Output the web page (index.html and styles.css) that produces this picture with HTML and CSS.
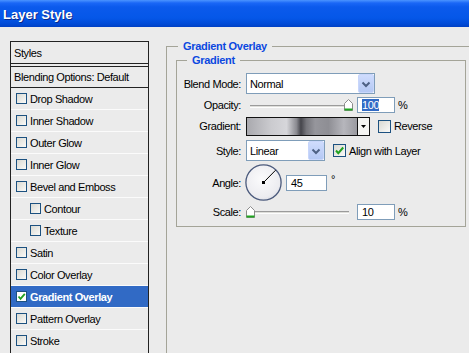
FILE: index.html
```html
<!DOCTYPE html>
<html lang="en">
<head>
    <meta charset="UTF-8">
    <title>Layer Style</title>
    <link rel="stylesheet" href="styles.css">
</head>
<body>

<div class="titlebar">Layer Style</div>

<div class="dialog">
    <ul class="style-list">
        <li class="list-head">Styles</li>
        <li class="list-blend">Blending Options: Default</li>
        <li class="layer"><span class="check"></span>Drop Shadow</li>
        <li class="layer"><span class="check"></span>Inner Shadow</li>
        <li class="layer"><span class="check"></span>Outer Glow</li>
        <li class="layer"><span class="check"></span>Inner Glow</li>
        <li class="layer"><span class="check"></span>Bevel and Emboss</li>
        <li class="layer sub"><span class="check"></span>Contour</li>
        <li class="layer sub"><span class="check"></span>Texture</li>
        <li class="layer"><span class="check"></span>Satin</li>
        <li class="layer"><span class="check"></span>Color Overlay</li>
        <li class="layer selected">
            <span class="check">
                <svg width="9" height="9" viewBox="0 0 9 9"><path d="M1.5 4.5 L3.5 6.8 L7.8 1.8" fill="none" stroke="#21a121" stroke-width="1.8"/></svg>
            </span>Gradient Overlay
        </li>
        <li class="layer"><span class="check"></span>Pattern Overlay</li>
        <li class="layer last"><span class="check"></span>Stroke</li>
    </ul>

    <fieldset class="group outer">
        <legend>Gradient Overlay</legend>
        <fieldset class="group inner">
            <legend>Gradient</legend>
            <div class="form-grid">
                <label>Blend Mode:</label>
                <div class="control">
                    <div class="select wide">
                        <span>Normal</span>
                        <span class="drop-btn"><svg width="10" height="7" viewBox="0 0 10 7"><path d="M1.5 1.5 L5 5 L8.5 1.5" fill="none" stroke="#4d6185" stroke-width="2"/></svg></span>
                    </div>
                </div>

                <label>Opacity:</label>
                <div class="control">
                    <div class="slider opacity">
                        <div class="slider-track"></div>
                        <svg class="slider-thumb" style="left: 98px" width="9" height="12" viewBox="0 0 9 12"><path d="M0.5 4.5 L4.5 0.5 L8.5 4.5 V11.5 H0.5 Z" fill="#fff" stroke="#8c8c8c"/><rect x="0.5" y="9.5" width="8" height="2" fill="#1fa51f"/></svg>
                    </div>
                    <div class="field short"><span class="selected-text">100</span></div>
                    <span class="unit">%</span>
                </div>

                <label>Gradient:</label>
                <div class="control">
                    <div class="gradient-picker">
                        <div class="swatch"></div>
                        <div class="swatch-arrow"><svg width="5" height="3" viewBox="0 0 5 3"><path d="M0 0 H5 L2.5 3 Z" fill="#000"/></svg></div>
                    </div>
                    <span class="check large spaced"></span>Reverse
                </div>

                <label>Style:</label>
                <div class="control">
                    <div class="select narrow">
                        <span>Linear</span>
                        <span class="drop-btn"><svg width="10" height="7" viewBox="0 0 10 7"><path d="M1.5 1.5 L5 5 L8.5 1.5" fill="none" stroke="#4d6185" stroke-width="2"/></svg></span>
                    </div>
                    <span class="check large spaced">
                        <svg width="11" height="11" viewBox="0 0 11 11"><path d="M2 5.5 L4.3 8.2 L9.2 2.5" fill="none" stroke="#21a121" stroke-width="2"/></svg>
                    </span>Align with Layer
                </div>

                <label>Angle:</label>
                <div class="control">
                    <svg class="dial" width="37" height="37" viewBox="0 0 37 37">
                        <defs>
                            <radialGradient id="dialFill" cx="45%" cy="40%" r="65%">
                                <stop offset="0" stop-color="#fbfbfc"/>
                                <stop offset="0.8" stop-color="#ececf0"/>
                                <stop offset="1" stop-color="#d6d8e2"/>
                            </radialGradient>
                        </defs>
                        <circle cx="18.5" cy="18.5" r="17.6" fill="url(#dialFill)" stroke="#4b5a7c" stroke-width="1.3"/>
                        <line x1="18.5" y1="18.5" x2="30.6" y2="6.2" stroke="#000" stroke-width="1"/>
                        <rect x="17" y="17" width="3" height="3" fill="#000"/>
                    </svg>
                    <div class="field angle">45</div>
                    <span class="degree">°</span>
                </div>

                <label>Scale:</label>
                <div class="control">
                    <div class="slider scale">
                        <div class="slider-track"></div>
                        <svg class="slider-thumb" style="left: 0px" width="9" height="12" viewBox="0 0 9 12"><path d="M0.5 4.5 L4.5 0.5 L8.5 4.5 V11.5 H0.5 Z" fill="#fff" stroke="#8c8c8c"/><rect x="0.5" y="9.5" width="8" height="2" fill="#1fa51f"/></svg>
                    </div>
                    <div class="field short">10</div>
                    <span class="unit">%</span>
                </div>
            </div>
        </fieldset>
    </fieldset>
</div>

</body>
</html>
```

FILE: styles.css
```css
/* Palette */
:root {
    --panel: #ebebeb;
    --ink: #000;
    --list-border: #222;
    --group-title: #0b48e0;
    --frame: #a4a498;
    --field-border: #7f9db9;
    --check-border: #1c5180;
    --selection: #316ac5;
}

/* Page */
body {
    margin: 0;
    height: 353px;
    overflow: hidden;
    background-color: var(--panel);
    font-family: "Liberation Sans", Arial, sans-serif;
    font-size: 11px;
    letter-spacing: -0.4px;
    color: var(--ink);
}

.titlebar {
    height: 25px;
    padding: 2px 3px 0;
    line-height: 25px;
    font-size: 13px;
    font-weight: bold;
    letter-spacing: 0;
    color: #fff;
    text-shadow: 1px 1px 0 #0b2a8a;
    background: linear-gradient(#4b94ff 0, #1a67f6 3px, #0b5aec 7px, #0557e8 18px, #004ad6 24px, #0040c4 27px);
}

.dialog {
    display: flex;
    align-items: flex-start;
}

/* Left list of effects (runs on below the window edge) */
.style-list {
    list-style: none;
    flex-shrink: 0;
    width: 139px;
    height: 312px;
    margin: 14px 0 0 10px;
    padding: 0;
    overflow: hidden;
    box-sizing: border-box;
    border: 1px solid var(--list-border);
    border-bottom: 0;
}

.style-list li {
    display: flex;
    align-items: center;
    padding-left: 3px;
    white-space: nowrap;
}

.style-list .list-head {
    height: 21px;
    border-bottom: 4px double var(--list-border);
}

.style-list .list-blend {
    height: 20px;
    border-bottom: 1px solid var(--list-border);
}

.style-list .layer {
    flex-shrink: 0;
    height: 21px;
    padding-left: 5px;
    border-bottom: 1px solid #fbfbfb;
}

.style-list .sub {
    padding-left: 19px;
}

.style-list .last {
    border-bottom: 0;
}

.style-list .selected {
    background-color: var(--selection);
    color: #fff;
    font-weight: bold;
}

/* Checkboxes */
.check {
    display: flex;
    align-items: center;
    justify-content: center;
    flex-shrink: 0;
    width: 11px;
    height: 11px;
    margin-right: 3px;
    box-sizing: border-box;
    border: 1px solid var(--check-border);
    background: linear-gradient(135deg, #d9d9d2, #fafaf8);
}

.selected .check {
    background: #fff;
}

.check.large {
    width: 13px;
    height: 13px;
}

.check.spaced {
    margin-left: 8px;
}

/* Group boxes */
.group {
    margin: 0;
    padding: 0;
    min-width: 0;
    border: 1px solid var(--frame);
}

.group legend {
    padding: 0 5px;
    line-height: 13px;
    font-weight: bold;
    letter-spacing: -0.3px;
    color: var(--group-title);
}

/* outer box is cut by the window's right and bottom edges */
.outer {
    flex-shrink: 0;
    width: 303px;
    height: 313px;
    margin: 13px 0 0 17px;
    padding: 1px 0 0 9px;
    box-sizing: border-box;
    border-right: 0;
    border-bottom: 0;
}

.outer > legend {
    margin-left: 2px;
}

.inner {
    width: 290px;
    padding: 6px 0 4px 0;
    box-sizing: border-box;
}

.inner > legend {
    margin-left: 10px;
}

.form-grid {
    display: grid;
    grid-template-columns: 64px auto;
    grid-template-rows: 21px 21px 22px 27px 37px 21px;
    column-gap: 5px;
    align-items: center;
}

.form-grid label {
    text-align: right;
    white-space: nowrap;
}

.control {
    display: flex;
    align-items: center;
    white-space: nowrap;
}

/* Drop-down lists */
.select {
    display: flex;
    align-items: center;
    justify-content: space-between;
    height: 21px;
    padding: 0 0 0 3px;
    box-sizing: border-box;
    border: 1px solid var(--field-border);
    background: #fff;
}

.select.wide {
    width: 129px;
}

.select.narrow {
    width: 79px;
}

.drop-btn {
    display: flex;
    align-items: center;
    justify-content: center;
    width: 16px;
    height: 19px;
    padding-top: 2px;
    box-sizing: border-box;
    border: 1px solid #c8d6fb;
    border-radius: 2px;
    background: linear-gradient(#cfdcfd, #b4c8f4);
}

/* Sliders */
.slider {
    position: relative;
    width: 107px;
    height: 12px;
    padding: 5px 4px 0;
    box-sizing: border-box;
}

.slider.opacity {
    padding-top: 6px;
}

.slider-track {
    height: 1px;
    border-top: 1px solid #9b9b9b;
    border-bottom: 1px solid #fdfdfd;
    background: #dededa;
}

.slider-thumb {
    position: absolute;
    top: 0;
}

/* Text boxes */
.field {
    height: 16px;
    padding-left: 4px;
    box-sizing: border-box;
    border: 1px solid var(--field-border);
    background: #fff;
    line-height: 14px;
}

.field.short {
    width: 38px;
    margin-left: 4px;
}

.field.angle {
    width: 41px;
    margin-left: 4px;
}

.selected-text {
    background: var(--selection);
    color: #fff;
}

.unit {
    margin-left: 3px;
}

.degree {
    align-self: flex-start;
    margin: 9px 0 0 4px;
}

.dial {
    margin-left: -1px;
}

/* Gradient picker */
.gradient-picker {
    display: flex;
    height: 19px;
}

.swatch {
    width: 112px;
    box-sizing: border-box;
    border: 1px solid #111;
    background: linear-gradient(to right, #a9a9ae 0%, #cbcbcf 22%, #d6d6da 36%, #8a8a90 45%, #45454b 49%, #76767c 54%, #96969c 62%, #8e8e94 74%, #b6b6bc 88%, #9a9aa0 100%);
}

.swatch-arrow {
    display: flex;
    align-items: center;
    justify-content: center;
    width: 12px;
    box-sizing: border-box;
    border: 1px solid #111;
    border-left: 0;
    background: #f4f4f2;
}
```
